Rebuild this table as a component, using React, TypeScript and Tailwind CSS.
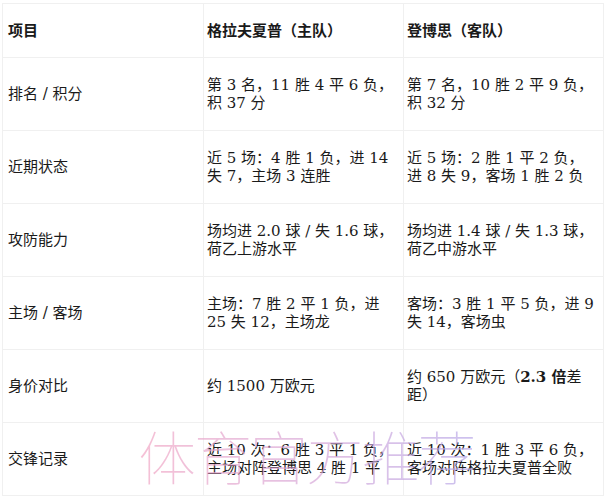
const rows: { label: string; home: React.ReactNode; away: React.ReactNode }[] = [
  {
    label: "排名 / 积分",
    home: "第 3 名，11 胜 4 平 6 负，积 37 分",
    away: "第 7 名，10 胜 2 平 9 负，积 32 分",
  },
  {
    label: "近期状态",
    home: "近 5 场：4 胜 1 负，进 14 失 7，主场 3 连胜",
    away: "近 5 场：2 胜 1 平 2 负，进 8 失 9，客场 1 胜 2 负",
  },
  {
    label: "攻防能力",
    home: "场均进 2.0 球 / 失 1.6 球，荷乙上游水平",
    away: "场均进 1.4 球 / 失 1.3 球，荷乙中游水平",
  },
  {
    label: "主场 / 客场",
    home: "主场：7 胜 2 平 1 负，进 25 失 12，主场龙",
    away: "客场：3 胜 1 平 5 负，进 9 失 14，客场虫",
  },
  {
    label: "身价对比",
    home: "约 1500 万欧元",
    away: (
      <>
        约 650 万欧元（<b>2.3 倍</b>差距）
      </>
    ),
  },
  {
    label: "交锋记录",
    home: "近 10 次：6 胜 3 平 1 负，主场对阵登博思 4 胜 1 平",
    away: "近 10 次：1 胜 3 平 6 负，客场对阵格拉夫夏普全败",
  },
];

const sans = "font-['DejaVu_Sans','Noto_Sans_CJK_SC',sans-serif]";
const serif = "font-['DejaVu_Serif','Noto_Sans_CJK_SC',serif]";

export default function App() {
  return (
    <div className="relative w-[609px] h-[500px] bg-white overflow-hidden pt-[3px] pl-[2px]">
      <table className="border-collapse table-fixed w-[601px] text-[15px] leading-[18px] text-[#1a1a1a]">
        <colgroup>
          <col className="w-[201px]" />
          <col className="w-[200px]" />
          <col className="w-[200px]" />
        </colgroup>
        <thead>
          <tr className="h-[54px]">
            <th className={`border border-[#f0f0f0] px-[5px] text-left font-bold ${sans}`}>项目</th>
            <th className={`border border-[#f0f0f0] pl-[3px] pr-[4px] text-left font-bold ${sans}`}>格拉夫夏普（主队）</th>
            <th className={`border border-[#f0f0f0] pl-[3px] pr-[6px] text-left font-bold ${sans}`}>登博思（客队）</th>
          </tr>
        </thead>
        <tbody>
          {rows.map((r) => (
            <tr key={r.label} className="h-[73px]">
              <td className={`border border-[#f0f0f0] px-[5px] ${sans}`}>{r.label}</td>
              <td className={`border border-[#f0f0f0] pl-[3px] pr-[4px] ${serif}`}>{r.home}</td>
              <td className={`border border-[#f0f0f0] pl-[3px] pr-[6px] ${serif}`}>{r.away}</td>
            </tr>
          ))}
        </tbody>
      </table>
      {/* watermark */}
      <div className="absolute left-[138px] top-[420px] pointer-events-none select-none text-[58px] leading-[70px] tracking-[-2px] font-thin font-['Noto_Sans_CJK_SC',serif] bg-gradient-to-r from-[#f2a6c4] via-[#d9a8d8] to-[#b8a8e8] bg-clip-text text-transparent opacity-70">
        体育官方推荐
      </div>
    </div>
  );
}
